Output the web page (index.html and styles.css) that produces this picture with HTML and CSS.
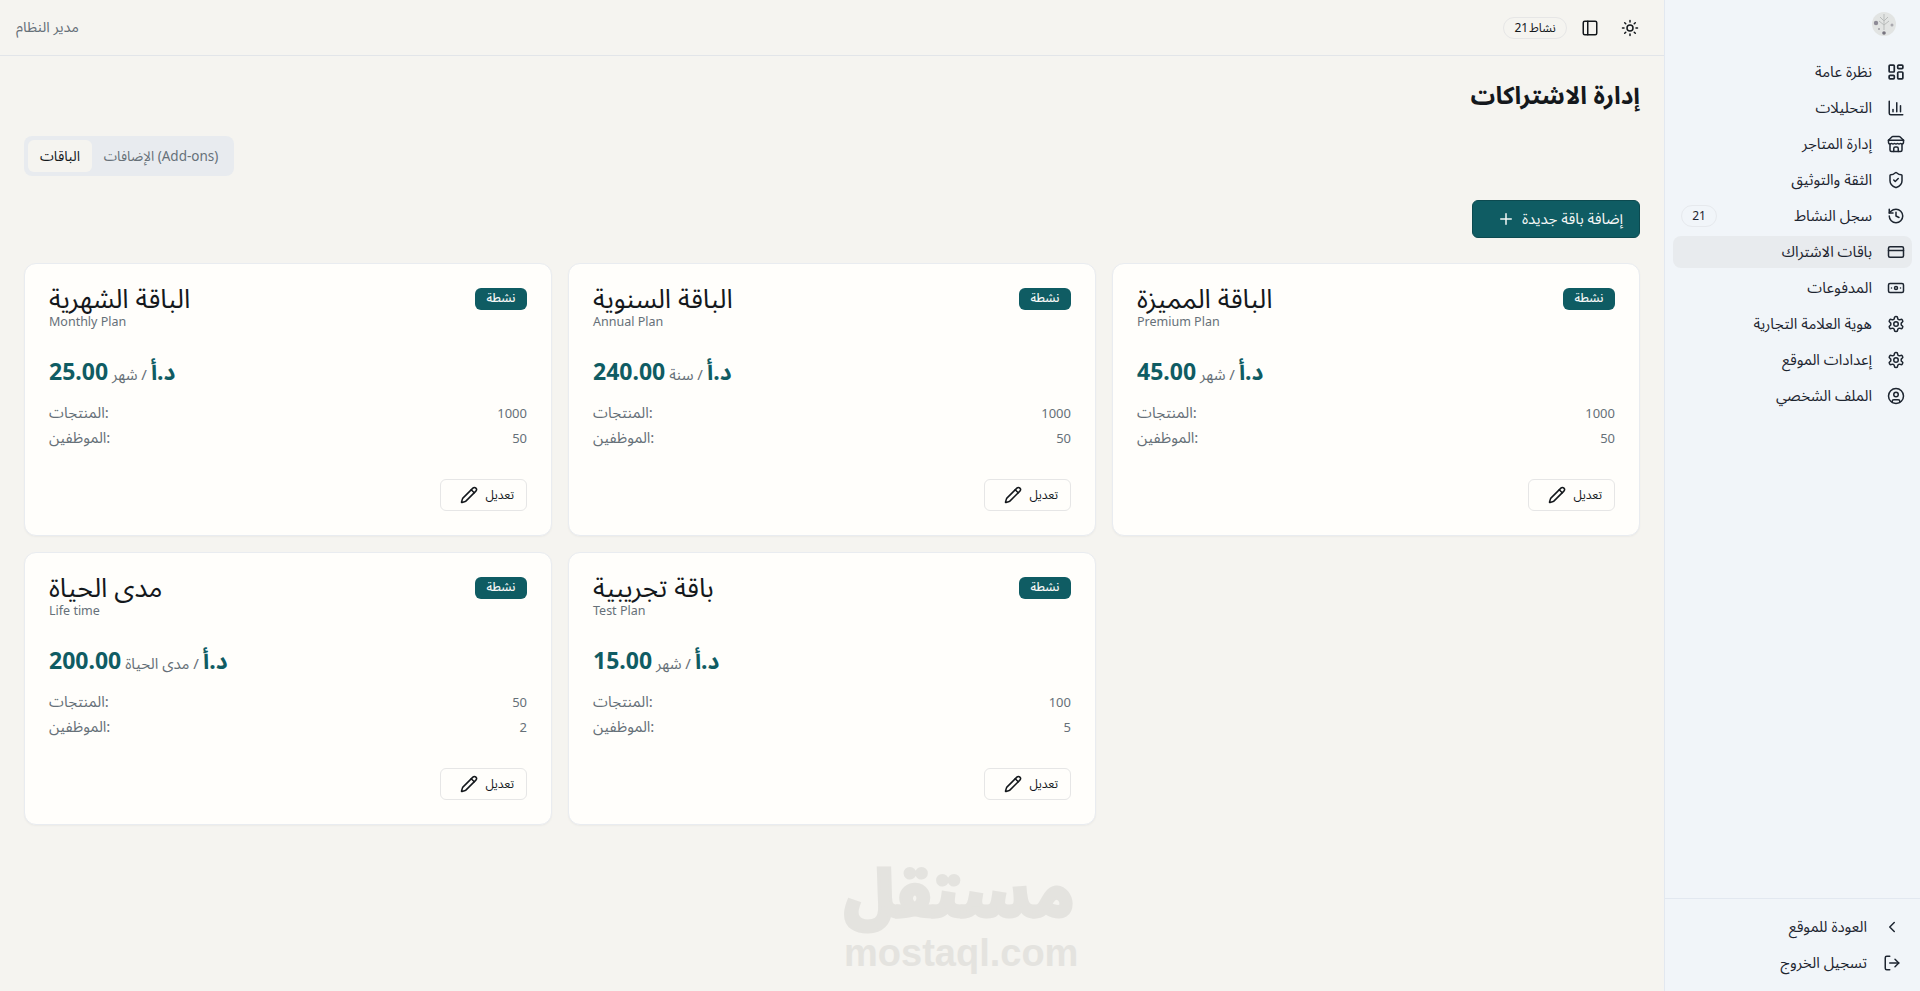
FILE: index.html
```html
<!DOCTYPE html>
<html lang="ar" dir="rtl">
<head>
  <meta charset="utf-8">
  <title>إدارة الاشتراكات</title>
  <link rel="stylesheet" href="styles.css">
</head>
<body>
  <svg class="sprite" xmlns="http://www.w3.org/2000/svg">
    <symbol id="i-dash" viewBox="1.5 1.5 21 21"><path d="M5 4h4a1 1 0 0 1 1 1v6a1 1 0 0 1-1 1H5a1 1 0 0 1-1-1V5a1 1 0 0 1 1-1"/><path d="M5 16h4a1 1 0 0 1 1 1v2a1 1 0 0 1-1 1H5a1 1 0 0 1-1-1v-2a1 1 0 0 1 1-1"/><path d="M15 12h4a1 1 0 0 1 1 1v6a1 1 0 0 1-1 1h-4a1 1 0 0 1-1-1v-6a1 1 0 0 1 1-1"/><path d="M15 4h4a1 1 0 0 1 1 1v2a1 1 0 0 1-1 1h-4a1 1 0 0 1-1-1V5a1 1 0 0 1 1-1"/></symbol>
    <symbol id="i-chart" viewBox="0 0 24 24"><path d="M3 3v16a2 2 0 0 0 2 2h16"/><path d="M18 17V9"/><path d="M13 17V5"/><path d="M8 17v-3"/></symbol>
    <symbol id="i-store" viewBox="0 0 24 24"><path d="m2 7 4.41-4.41A2 2 0 0 1 7.83 2h8.34a2 2 0 0 1 1.42.59L22 7"/><path d="M4 12v8a2 2 0 0 0 2 2h12a2 2 0 0 0 2-2v-8"/><path d="M15 22v-4a2 2 0 0 0-2-2h-2a2 2 0 0 0-2 2v4"/><path d="M2 7h20"/><path d="M22 7v3a2 2 0 0 1-2 2 2.7 2.7 0 0 1-1.59-.63.7.7 0 0 0-.82 0A2.7 2.7 0 0 1 16 12a2.7 2.7 0 0 1-1.59-.63.7.7 0 0 0-.82 0A2.7 2.7 0 0 1 12 12a2.7 2.7 0 0 1-1.59-.63.7.7 0 0 0-.82 0A2.7 2.7 0 0 1 8 12a2.7 2.7 0 0 1-1.59-.63.7.7 0 0 0-.82 0A2.7 2.7 0 0 1 4 12a2 2 0 0 1-2-2V7"/></symbol>
    <symbol id="i-shield" viewBox="0 0 24 24"><path d="M20 13c0 5-3.5 7.5-7.66 8.95a1 1 0 0 1-.67-.01C7.5 20.5 4 18 4 13V6a1 1 0 0 1 1-1c2 0 4.5-1.2 6.24-2.72a1.17 1.17 0 0 1 1.52 0C14.51 3.81 17 5 19 5a1 1 0 0 1 1 1z"/><path d="m9 12 2 2 4-4"/></symbol>
    <symbol id="i-history" viewBox="0 0 24 24"><path d="M3 12a9 9 0 1 0 9-9 9.75 9.75 0 0 0-6.74 2.74L3 8"/><path d="M3 3v5h5"/><path d="M12 7v5l4 2"/></symbol>
    <symbol id="i-card" viewBox="0 0 24 24"><rect x="2" y="5" width="20" height="14" rx="2"/><path d="M2 10h20"/></symbol>
    <symbol id="i-cash" viewBox="0 0 24 24"><rect x="2" y="6" width="20" height="12" rx="2"/><circle cx="12" cy="12" r="2"/><path d="M6 12h.01M18 12h.01"/></symbol>
    <symbol id="i-gear" viewBox="0 0 24 24"><path d="M12.22 2h-.44a2 2 0 0 0-2 2v.18a2 2 0 0 1-1 1.73l-.43.25a2 2 0 0 1-2 0l-.15-.08a2 2 0 0 0-2.73.73l-.22.38a2 2 0 0 0 .73 2.73l.15.1a2 2 0 0 1 1 1.72v.51a2 2 0 0 1-1 1.74l-.15.09a2 2 0 0 0-.73 2.73l.22.38a2 2 0 0 0 2.73.73l.15-.08a2 2 0 0 1 2 0l.43.25a2 2 0 0 1 1 1.73V20a2 2 0 0 0 2 2h.44a2 2 0 0 0 2-2v-.18a2 2 0 0 1 1-1.73l.43-.25a2 2 0 0 1 2 0l.15.08a2 2 0 0 0 2.73-.73l.22-.39a2 2 0 0 0-.73-2.73l-.15-.08a2 2 0 0 1-1-1.74v-.5a2 2 0 0 1 1-1.74l.15-.09a2 2 0 0 0 .73-2.73l-.22-.38a2 2 0 0 0-2.73-.73l-.15.08a2 2 0 0 1-2 0l-.43-.25a2 2 0 0 1-1-1.73V4a2 2 0 0 0-2-2z"/><circle cx="12" cy="12" r="3"/></symbol>
    <symbol id="i-user" viewBox="0 0 24 24"><circle cx="12" cy="12" r="10"/><circle cx="12" cy="10" r="3"/><path d="M7 20.662V19a2 2 0 0 1 2-2h6a2 2 0 0 1 2 2v1.662"/></symbol>
    <symbol id="i-chevron" viewBox="0 0 24 24"><path d="m15 18-6-6 6-6"/></symbol>
    <symbol id="i-logout" viewBox="0 0 24 24"><path d="M9 21H5a2 2 0 0 1-2-2V5a2 2 0 0 1 2-2h4"/><path d="m16 17 5-5-5-5"/><path d="M21 12H9"/></symbol>
    <symbol id="i-pencil" viewBox="0 0 24 24"><path d="M21.174 6.812a1 1 0 0 0-3.986-3.987L3.842 16.174a2 2 0 0 0-.5.83l-1.321 4.352a.5.5 0 0 0 .623.622l4.353-1.32a2 2 0 0 0 .83-.497z"/><path d="m15 5 4 4"/></symbol>
    <symbol id="i-plus" viewBox="0 0 24 24"><path d="M5 12h14"/><path d="M12 5v14"/></symbol>
    <symbol id="i-sun" viewBox="0 0 24 24"><circle cx="12" cy="12" r="4"/><path d="M12 2v2M12 20v2M4.93 4.93l1.41 1.41M17.66 17.66l1.41 1.41M2 12h2M20 12h2M6.34 17.66l-1.41 1.41M19.07 4.93l-1.41 1.41"/></symbol>
    <symbol id="i-panel" viewBox="0 0 24 24"><rect x="3" y="3" width="18" height="18" rx="2"/><path d="M9 3v18"/></symbol>
  </svg>

  <div class="layout">
    <!-- Sidebar -->
    <aside class="sidebar">
      <div class="side-logo">
        <svg class="avatar" viewBox="0 0 24 24" xmlns="http://www.w3.org/2000/svg">
          <circle cx="12" cy="12" r="12" fill="#e2e4e3"/>
          <path d="M12 2v16M8 5l4 4 4-4M7 9l5 4 5-4" fill="none" stroke="#b9bcbb" stroke-width="1"/>
          <circle cx="4" cy="11" r="2.2" fill="#8d8a96"/>
          <circle cx="12" cy="21" r="1.8" fill="#77747f"/>
          <circle cx="20" cy="13" r="1.5" fill="#a9a8ae"/>
          <circle cx="7" cy="17" r="1" fill="#a09fa6"/>
        </svg>
      </div>
      <nav class="side-nav">
        <a class="side-link"><svg class="icon"><use href="#i-dash"/></svg><span>نظرة عامة</span></a>
        <a class="side-link"><svg class="icon"><use href="#i-chart"/></svg><span>التحليلات</span></a>
        <a class="side-link"><svg class="icon"><use href="#i-store"/></svg><span>إدارة المتاجر</span></a>
        <a class="side-link"><svg class="icon"><use href="#i-shield"/></svg><span>الثقة والتوثيق</span></a>
        <a class="side-link"><svg class="icon"><use href="#i-history"/></svg><span>سجل النشاط</span><em class="count">21</em></a>
        <a class="side-link active"><svg class="icon"><use href="#i-card"/></svg><span>باقات الاشتراك</span></a>
        <a class="side-link"><svg class="icon"><use href="#i-cash"/></svg><span>المدفوعات</span></a>
        <a class="side-link"><svg class="icon"><use href="#i-gear"/></svg><span>هوية العلامة التجارية</span></a>
        <a class="side-link"><svg class="icon"><use href="#i-gear"/></svg><span>إعدادات الموقع</span></a>
        <a class="side-link"><svg class="icon"><use href="#i-user"/></svg><span>الملف الشخصي</span></a>
      </nav>
      <div class="side-foot">
        <a class="foot-link"><svg class="icon"><use href="#i-chevron"/></svg><span>العودة للموقع</span></a>
        <a class="foot-link"><svg class="icon"><use href="#i-logout"/></svg><span>تسجيل الخروج</span></a>
      </div>
    </aside>

    <div class="main">
      <header class="topbar">
        <div class="top-tools">
          <svg class="icon"><use href="#i-sun"/></svg>
          <svg class="icon"><use href="#i-panel"/></svg>
          <span class="pill">نشاط 21</span>
        </div>
        <span class="top-user">مدير النظام</span>
      </header>

      <main class="content">
        <h1 class="page-title">إدارة الاشتراكات</h1>

        <div class="tabs-row">
          <div class="tabs">
            <button class="tab active">الباقات</button>
            <button class="tab">الإضافات (Add-ons)</button>
          </div>
        </div>

        <div class="actions">
          <button class="btn-add"><svg class="icon"><use href="#i-plus"/></svg><span>إضافة باقة جديدة</span></button>
        </div>

        <div class="plans">
          <div class="plan">
            <div class="plan-head">
              <div><h3>الباقة المميزة</h3><p>Premium Plan</p></div>
              <span class="badge">نشطة</span>
            </div>
            <div class="price"><b>45.00</b><span>شهر /</span><b class="cur">د.أ</b></div>
            <div class="row"><span>المنتجات:</span><span class="num">1000</span></div>
            <div class="row"><span>الموظفين:</span><span class="num">50</span></div>
            <div class="plan-foot"><button class="btn-edit"><svg class="icon"><use href="#i-pencil"/></svg><span>تعديل</span></button></div>
          </div>

          <div class="plan">
            <div class="plan-head">
              <div><h3>الباقة السنوية</h3><p>Annual Plan</p></div>
              <span class="badge">نشطة</span>
            </div>
            <div class="price"><b>240.00</b><span>سنة /</span><b class="cur">د.أ</b></div>
            <div class="row"><span>المنتجات:</span><span class="num">1000</span></div>
            <div class="row"><span>الموظفين:</span><span class="num">50</span></div>
            <div class="plan-foot"><button class="btn-edit"><svg class="icon"><use href="#i-pencil"/></svg><span>تعديل</span></button></div>
          </div>

          <div class="plan">
            <div class="plan-head">
              <div><h3>الباقة الشهرية</h3><p>Monthly Plan</p></div>
              <span class="badge">نشطة</span>
            </div>
            <div class="price"><b>25.00</b><span>شهر /</span><b class="cur">د.أ</b></div>
            <div class="row"><span>المنتجات:</span><span class="num">1000</span></div>
            <div class="row"><span>الموظفين:</span><span class="num">50</span></div>
            <div class="plan-foot"><button class="btn-edit"><svg class="icon"><use href="#i-pencil"/></svg><span>تعديل</span></button></div>
          </div>

          <div class="plan second-col">
            <div class="plan-head">
              <div><h3>باقة تجريبية</h3><p>Test Plan</p></div>
              <span class="badge">نشطة</span>
            </div>
            <div class="price"><b>15.00</b><span>شهر /</span><b class="cur">د.أ</b></div>
            <div class="row"><span>المنتجات:</span><span class="num">100</span></div>
            <div class="row"><span>الموظفين:</span><span class="num">5</span></div>
            <div class="plan-foot"><button class="btn-edit"><svg class="icon"><use href="#i-pencil"/></svg><span>تعديل</span></button></div>
          </div>

          <div class="plan">
            <div class="plan-head">
              <div><h3>مدى الحياة</h3><p>Life time</p></div>
              <span class="badge">نشطة</span>
            </div>
            <div class="price"><b>200.00</b><span>مدى الحياة /</span><b class="cur">د.أ</b></div>
            <div class="row"><span>المنتجات:</span><span class="num">50</span></div>
            <div class="row"><span>الموظفين:</span><span class="num">2</span></div>
            <div class="plan-foot"><button class="btn-edit"><svg class="icon"><use href="#i-pencil"/></svg><span>تعديل</span></button></div>
          </div>
        </div>
      </main>

      <div class="watermark">
        <div class="wm-ar">مستقل</div>
        <div class="wm-en">mostaql.com</div>
      </div>
    </div>
  </div>
</body>
</html>
```

FILE: styles.css
```css
* {
  box-sizing: border-box;
}

html, body {
  margin: 0;
  height: 100%;
}

body {
  font-family: "Noto Sans", "Noto Sans Arabic", "DejaVu Sans", sans-serif;
  background-color: #f5f4f0;
  color: #14181c;
  overflow: hidden;
}

.sprite {
  display: none;
}

.icon {
  width: 18px;
  height: 18px;
  flex: none;
  fill: none;
  stroke: currentColor;
  stroke-width: 2;
  stroke-linecap: round;
  stroke-linejoin: round;
}

.layout {
  display: flex;
  height: 991px;
}

/* Sidebar */
.sidebar {
  width: 256px;
  flex: none;
  display: flex;
  flex-direction: column;
  background-color: #f1f5f9;
  border-left: 1px solid #e2e8f0;
}

.side-logo {
  padding: 12px 24px 0 0;
  height: 56px;
}

.avatar {
  width: 24px;
  height: 24px;
  display: block;
}

.side-nav {
  display: flex;
  flex-direction: column;
  gap: 4px;
  padding: 0 8px;
  flex: 1;
}

.side-link {
  display: flex;
  align-items: center;
  gap: 15px;
  height: 32px;
  padding: 0 7px 0 8px;
  border-radius: 8px;
  font-size: 15px;
  color: #1d2530;
}

.side-link.active {
  background-color: #e8ebee;
}

.count {
  margin-right: auto;
  font-style: normal;
  font-size: 12px;
  height: 22px;
  line-height: 20px;
  width: 36px;
  text-align: center;
  border: 1px solid #e6e9ed;
  border-radius: 11px;
}

.side-foot {
  border-top: 1px solid #e2e8f0;
  padding: 12px 16px;
  display: flex;
  flex-direction: column;
  gap: 4px;
}

.foot-link {
  display: flex;
  align-items: center;
  gap: 16px;
  height: 32px;
  padding: 0 3px;
  font-size: 15px;
  color: #1d2530;
}

/* Main */
.main {
  flex: 1;
  min-width: 0;
  position: relative;
}

.topbar {
  height: 56px;
  display: flex;
  align-items: center;
  justify-content: space-between;
  padding: 0 25px 0 16px;
  border-bottom: 1px solid #e2e5e9;
}

.top-tools {
  display: flex;
  align-items: center;
  gap: 22px;
}

.pill {
  margin-right: -8px;
  font-size: 12px;
  word-spacing: -2px;
  height: 22px;
  line-height: 20px;
  width: 64px;
  text-align: center;
  border: 1px solid #e6e6e6;
  border-radius: 11px;
}

.top-user {
  font-size: 14.5px;
  color: #667078;
}

.content {
  padding: 23px 24px 24px;
}

.page-title {
  margin: 0;
  height: 32px;
  line-height: 32px;
  font-size: 24.5px;
  font-weight: 700;
}

.tabs-row {
  display: flex;
  justify-content: flex-end;
  margin-top: 25px;
}

.tabs {
  display: flex;
  direction: ltr;
  padding: 4px;
  background-color: #e8ebef;
  border-radius: 8px;
}

.tab {
  font: inherit;
  font-size: 13.5px;
  width: 138px;
  height: 32px;
  padding: 0;
  border: none;
  background: none;
  border-radius: 6px;
  color: #667078;
}

.tab.active {
  width: 64px;
  font-size: 14px;
  color: #14181c;
  background-color: #f5f4f0;
}

.actions {
  display: flex;
  margin-top: 24px;
}

.btn-add {
  font: inherit;
  font-size: 15px;
  direction: ltr;
  display: flex;
  align-items: center;
  justify-content: flex-end;
  gap: 7px;
  height: 38px;
  width: 168px;
  padding: 0 16px 0 0;
  color: #f5f7f6;
  background-color: #0f5c63;
  border: 1px solid #0c4a50;
  border-radius: 6px;
}

.plans {
  display: grid;
  grid-template-columns: repeat(3, 1fr);
  gap: 16px;
  margin-top: 25px;
}

.plan {
  direction: ltr;
  height: 273px;
  padding: 23px 24px 24px;
  display: flex;
  flex-direction: column;
  background-color: #fffefb;
  border: 1px solid #e9ecf0;
  border-radius: 12px;
  box-shadow: 0 1px 2px rgba(0, 0, 0, 0.04);
}

.second-col {
  grid-column: 2;
}

.plan-head {
  display: flex;
  justify-content: space-between;
  align-items: flex-start;
  height: 54px;
}

.plan-head h3 {
  margin: -3px 0 2px;
  font-size: 26.5px;
  font-weight: 400;
  line-height: 28px;
}

.plan-head p {
  margin: 0;
  font-size: 12.5px;
  line-height: 16px;
  color: #667078;
}

.badge {
  margin-top: 1px;
  font-size: 12px;
  font-weight: 500;
  height: 22px;
  line-height: 20px;
  width: 52px;
  text-align: center;
  color: #f5f7f6;
  background-color: #0f5c63;
  border-radius: 6px;
}

.price {
  display: flex;
  align-items: baseline;
  gap: 4px;
  margin-top: 7px;
  height: 36px;
  color: #0f5c63;
}

.price b {
  font-size: 23px;
  font-weight: 700;
}

.price span {
  font-size: 15px;
  color: #667078;
}

.row {
  display: flex;
  justify-content: space-between;
  align-items: baseline;
  font-size: 15px;
  line-height: 24px;
  color: #667078;
}

.row .num {
  font-size: 13px;
}

.price + .row {
  margin-top: 16px;
}

.plan-foot {
  margin-top: auto;
  display: flex;
  justify-content: flex-end;
}

.btn-edit {
  font: inherit;
  font-size: 12px;
  display: flex;
  align-items: center;
  justify-content: flex-end;
  gap: 7px;
  width: 87px;
  height: 32px;
  padding: 0 12px 0 0;
  color: #14181c;
  background: none;
  border: 1px solid #e6e6e6;
  border-radius: 6px;
}

/* Watermark lies over the page */
.watermark {
  position: absolute;
  left: 844px;
  top: 850px;
  width: 230px;
  text-align: center;
  direction: ltr;
  color: #e4e3df;
  font-weight: 900;
  pointer-events: none;
}

.wm-ar {
  font-size: 65px;
  line-height: 84px;
  -webkit-text-stroke: 3px #e4e3df;
}

.wm-en {
  font-family: "Liberation Sans", sans-serif;
  font-weight: 700;
  font-size: 38px;
  line-height: 38px;
}
```
